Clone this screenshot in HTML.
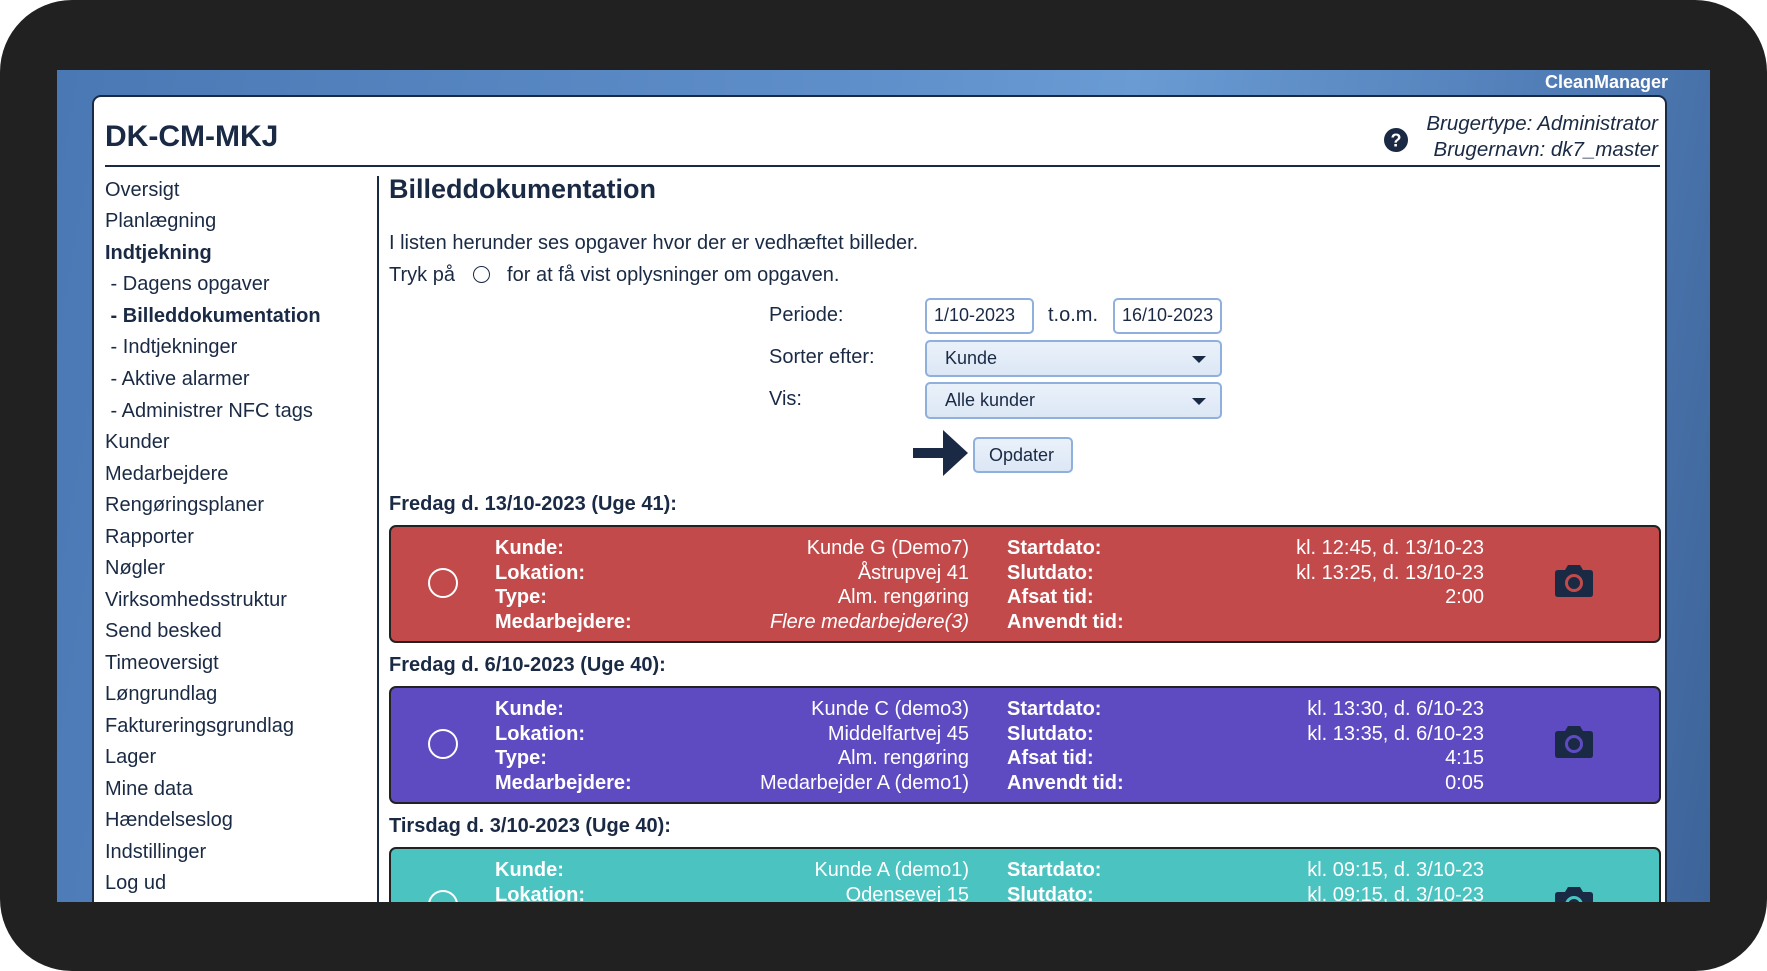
<!DOCTYPE html>
<html><head><meta charset="utf-8"><style>
*{margin:0;padding:0;box-sizing:border-box}
body{width:1767px;height:971px;background:#fff;overflow:hidden;font-family:"Liberation Sans",Arial,sans-serif;color:#1a2a44;position:relative}
.frame{position:absolute;left:0;top:0;width:1767px;height:971px;background:#212121;border-radius:72px}
.blue{position:absolute;left:57px;top:70px;width:1653px;height:832px;background:linear-gradient(100deg,#4a78b4 0%,#5f8fca 45%,#6a9bd3 60%,#4f7bb5 85%,#3d6499 100%);overflow:hidden}
.cm{position:absolute;right:42px;top:2px;color:#fff;font-weight:bold;font-size:18px}
.panel{position:absolute;left:35px;top:25px;width:1575px;height:820px;background:#fff;border:2px solid #1a2a44;border-radius:9px 9px 0 0}
.a{position:absolute;white-space:nowrap}
.menu div{position:absolute;left:11px;font-size:20px;white-space:nowrap}
.inp{position:absolute;border:2px solid #8fb0dc;border-radius:5px;background:#fff;font-size:18px;padding-left:7px;line-height:31px}
.sel,.btn{position:absolute;border:2px solid #8fb0dc;border-radius:5px;background:linear-gradient(#eaf1fa,#dce7f5);font-size:18px;padding-left:18px;line-height:32px}
.sel:after{content:"";position:absolute;right:14px;top:14px;border-left:7px solid transparent;border-right:7px solid transparent;border-top:7px solid #1a2a44}
.box{position:absolute;left:295px;width:1272px;height:118px;border:2px solid #222;border-radius:7px;color:#fff;font-size:20px}
.box .c{position:absolute;left:37px;top:41px;width:30px;height:30px;border:2.5px solid #fff;border-radius:50%}
.box .r{position:absolute;line-height:24.5px;top:9px}
.b{font-weight:bold}
.dh{position:absolute;left:295px;font-weight:bold;font-size:20px}
</style></head><body>
<div class="frame"></div>
<div class="blue">
<div class="cm">CleanManager</div>
<div class="panel">
<div class="a" style="left:11px;top:23px;font-size:30px;font-weight:bold">DK-CM-MKJ</div>
<svg class="a" style="left:1289px;top:30px" width="26" height="26" viewBox="0 0 26 26"><circle cx="13" cy="13" r="12" fill="#1a2a44"/><text x="13" y="19.5" text-anchor="middle" fill="#fff" font-family="Liberation Sans" font-weight="bold" font-size="18">?</text></svg>
<div class="a" style="right:7px;top:14px;font-size:20.5px;font-style:italic;text-align:right;line-height:26px">Brugertype: Administrator<br>Brugernavn: dk7_master</div>
<div class="a" style="left:11px;top:68px;width:1555px;height:2px;background:#1a2a44"></div>
<div class="a" style="left:283px;top:79px;width:2px;height:760px;background:#1a2a44"></div>
<div class="menu" style="position:absolute;left:0;top:12px">
<div style="top:70px">Oversigt</div>
<div style="top:101px">Planlægning</div>
<div style="top:133px;font-weight:bold">Indtjekning</div>
<div style="top:164px">&nbsp;- Dagens opgaver</div>
<div style="top:196px;font-weight:bold">&nbsp;- Billeddokumentation</div>
<div style="top:227px">&nbsp;- Indtjekninger</div>
<div style="top:259px">&nbsp;- Aktive alarmer</div>
<div style="top:291px">&nbsp;- Administrer NFC tags</div>
<div style="top:322px">Kunder</div>
<div style="top:354px">Medarbejdere</div>
<div style="top:385px">Rengøringsplaner</div>
<div style="top:417px">Rapporter</div>
<div style="top:448px">Nøgler</div>
<div style="top:480px">Virksomhedsstruktur</div>
<div style="top:511px">Send besked</div>
<div style="top:543px">Timeoversigt</div>
<div style="top:574px">Løngrundlag</div>
<div style="top:606px">Faktureringsgrundlag</div>
<div style="top:637px">Lager</div>
<div style="top:669px">Mine data</div>
<div style="top:700px">Hændelseslog</div>
<div style="top:732px">Indstillinger</div>
<div style="top:763px">Log ud</div>
</div>
<div class="a" style="left:295px;top:77px;font-size:27px;font-weight:bold">Billeddokumentation</div>
<div class="a" style="left:295px;top:135px;font-size:20px">I listen herunder ses opgaver hvor der er vedhæftet billeder.</div>
<div class="a" style="left:295px;top:167px;font-size:20px">Tryk på <span style="display:inline-block;width:17px;height:17px;border:1.5px solid #1a2a44;border-radius:50%;margin:0 12px 0 12px;vertical-align:-2px"></span> for at få vist oplysninger om opgaven.</div>
<div class="a" style="left:675px;top:207px;font-size:20px">Periode:</div>
<div class="inp" style="left:831px;top:201px;width:109px;height:36px">1/10-2023</div>
<div class="a" style="left:954px;top:207px;font-size:20px">t.o.m.</div>
<div class="inp" style="left:1019px;top:201px;width:109px;height:36px">16/10-2023</div>
<div class="a" style="left:675px;top:249px;font-size:20px">Sorter efter:</div>
<div class="sel" style="left:831px;top:243px;width:297px;height:37px">Kunde</div>
<div class="a" style="left:675px;top:291px;font-size:20px">Vis:</div>
<div class="sel" style="left:831px;top:285px;width:297px;height:37px">Alle kunder</div>
<svg class="a" style="left:819px;top:331px" width="56" height="50" viewBox="0 0 56 50"><path d="M0 20 H30 V2 L55 25 L30 48 V30 H0 Z" fill="#1a2a44"/></svg>
<div class="btn" style="left:879px;top:340px;width:100px;height:36px;padding-left:14px;font-size:18px">Opdater</div>
<div class="dh" style="top:396px">Fredag d. 13/10-2023 (Uge 41):</div>
<div class="box" style="top:428px;background:#c24a4b">
<div class="c"></div>
<div class="r b" style="left:104px">Kunde:<br>Lokation:<br>Type:<br>Medarbejdere:</div>
<div class="r" style="right:690px;text-align:right">Kunde G (Demo7)<br>Åstrupvej 41<br>Alm. rengøring<br><i>Flere medarbejdere(3)</i></div>
<div class="r b" style="left:616px">Startdato:<br>Slutdato:<br>Afsat tid:<br>Anvendt tid:</div>
<div class="r" style="right:175px;text-align:right">kl. 12:45, d. 13/10-23<br>kl. 13:25, d. 13/10-23<br>2:00<br>&nbsp;</div>
<svg class="a" style="left:1163px;top:37px" width="40" height="34" viewBox="0 0 40 34"><path d="M4 6 H11 L14 1 H26 L29 6 H36 Q39 6 39 9 V30 Q39 33 36 33 H4 Q1 33 1 30 V9 Q1 6 4 6Z" fill="#1a2a44"/><circle cx="20" cy="19" r="7.5" fill="none" stroke="#c24a4b" stroke-width="3"/></svg>
</div>
<div class="dh" style="top:557px">Fredag d. 6/10-2023 (Uge 40):</div>
<div class="box" style="top:589px;background:#5e4bc2">
<div class="c"></div>
<div class="r b" style="left:104px">Kunde:<br>Lokation:<br>Type:<br>Medarbejdere:</div>
<div class="r" style="right:690px;text-align:right">Kunde C (demo3)<br>Middelfartvej 45<br>Alm. rengøring<br>Medarbejder A (demo1)</div>
<div class="r b" style="left:616px">Startdato:<br>Slutdato:<br>Afsat tid:<br>Anvendt tid:</div>
<div class="r" style="right:175px;text-align:right">kl. 13:30, d. 6/10-23<br>kl. 13:35, d. 6/10-23<br>4:15<br>0:05</div>
<svg class="a" style="left:1163px;top:37px" width="40" height="34" viewBox="0 0 40 34"><path d="M4 6 H11 L14 1 H26 L29 6 H36 Q39 6 39 9 V30 Q39 33 36 33 H4 Q1 33 1 30 V9 Q1 6 4 6Z" fill="#1a2a44"/><circle cx="20" cy="19" r="7.5" fill="none" stroke="#5e4bc2" stroke-width="3"/></svg>
</div>
<div class="dh" style="top:718px">Tirsdag d. 3/10-2023 (Uge 40):</div>
<div class="box" style="top:750px;background:#4bc3c1">
<div class="c"></div>
<div class="r b" style="left:104px">Kunde:<br>Lokation:<br>Type:<br>Medarbejdere:</div>
<div class="r" style="right:690px;text-align:right">Kunde A (demo1)<br>Odensevej 15<br>Alm. rengøring<br>&nbsp;</div>
<div class="r b" style="left:616px">Startdato:<br>Slutdato:<br>Afsat tid:<br>Anvendt tid:</div>
<div class="r" style="right:175px;text-align:right">kl. 09:15, d. 3/10-23<br>kl. 09:15, d. 3/10-23<br>&nbsp;<br>&nbsp;</div>
<svg class="a" style="left:1163px;top:37px" width="40" height="34" viewBox="0 0 40 34"><path d="M4 6 H11 L14 1 H26 L29 6 H36 Q39 6 39 9 V30 Q39 33 36 33 H4 Q1 33 1 30 V9 Q1 6 4 6Z" fill="#1a2a44"/><circle cx="20" cy="19" r="7.5" fill="none" stroke="#4bc3c1" stroke-width="3"/></svg>
</div>
</div>
</div>
</body></html>
